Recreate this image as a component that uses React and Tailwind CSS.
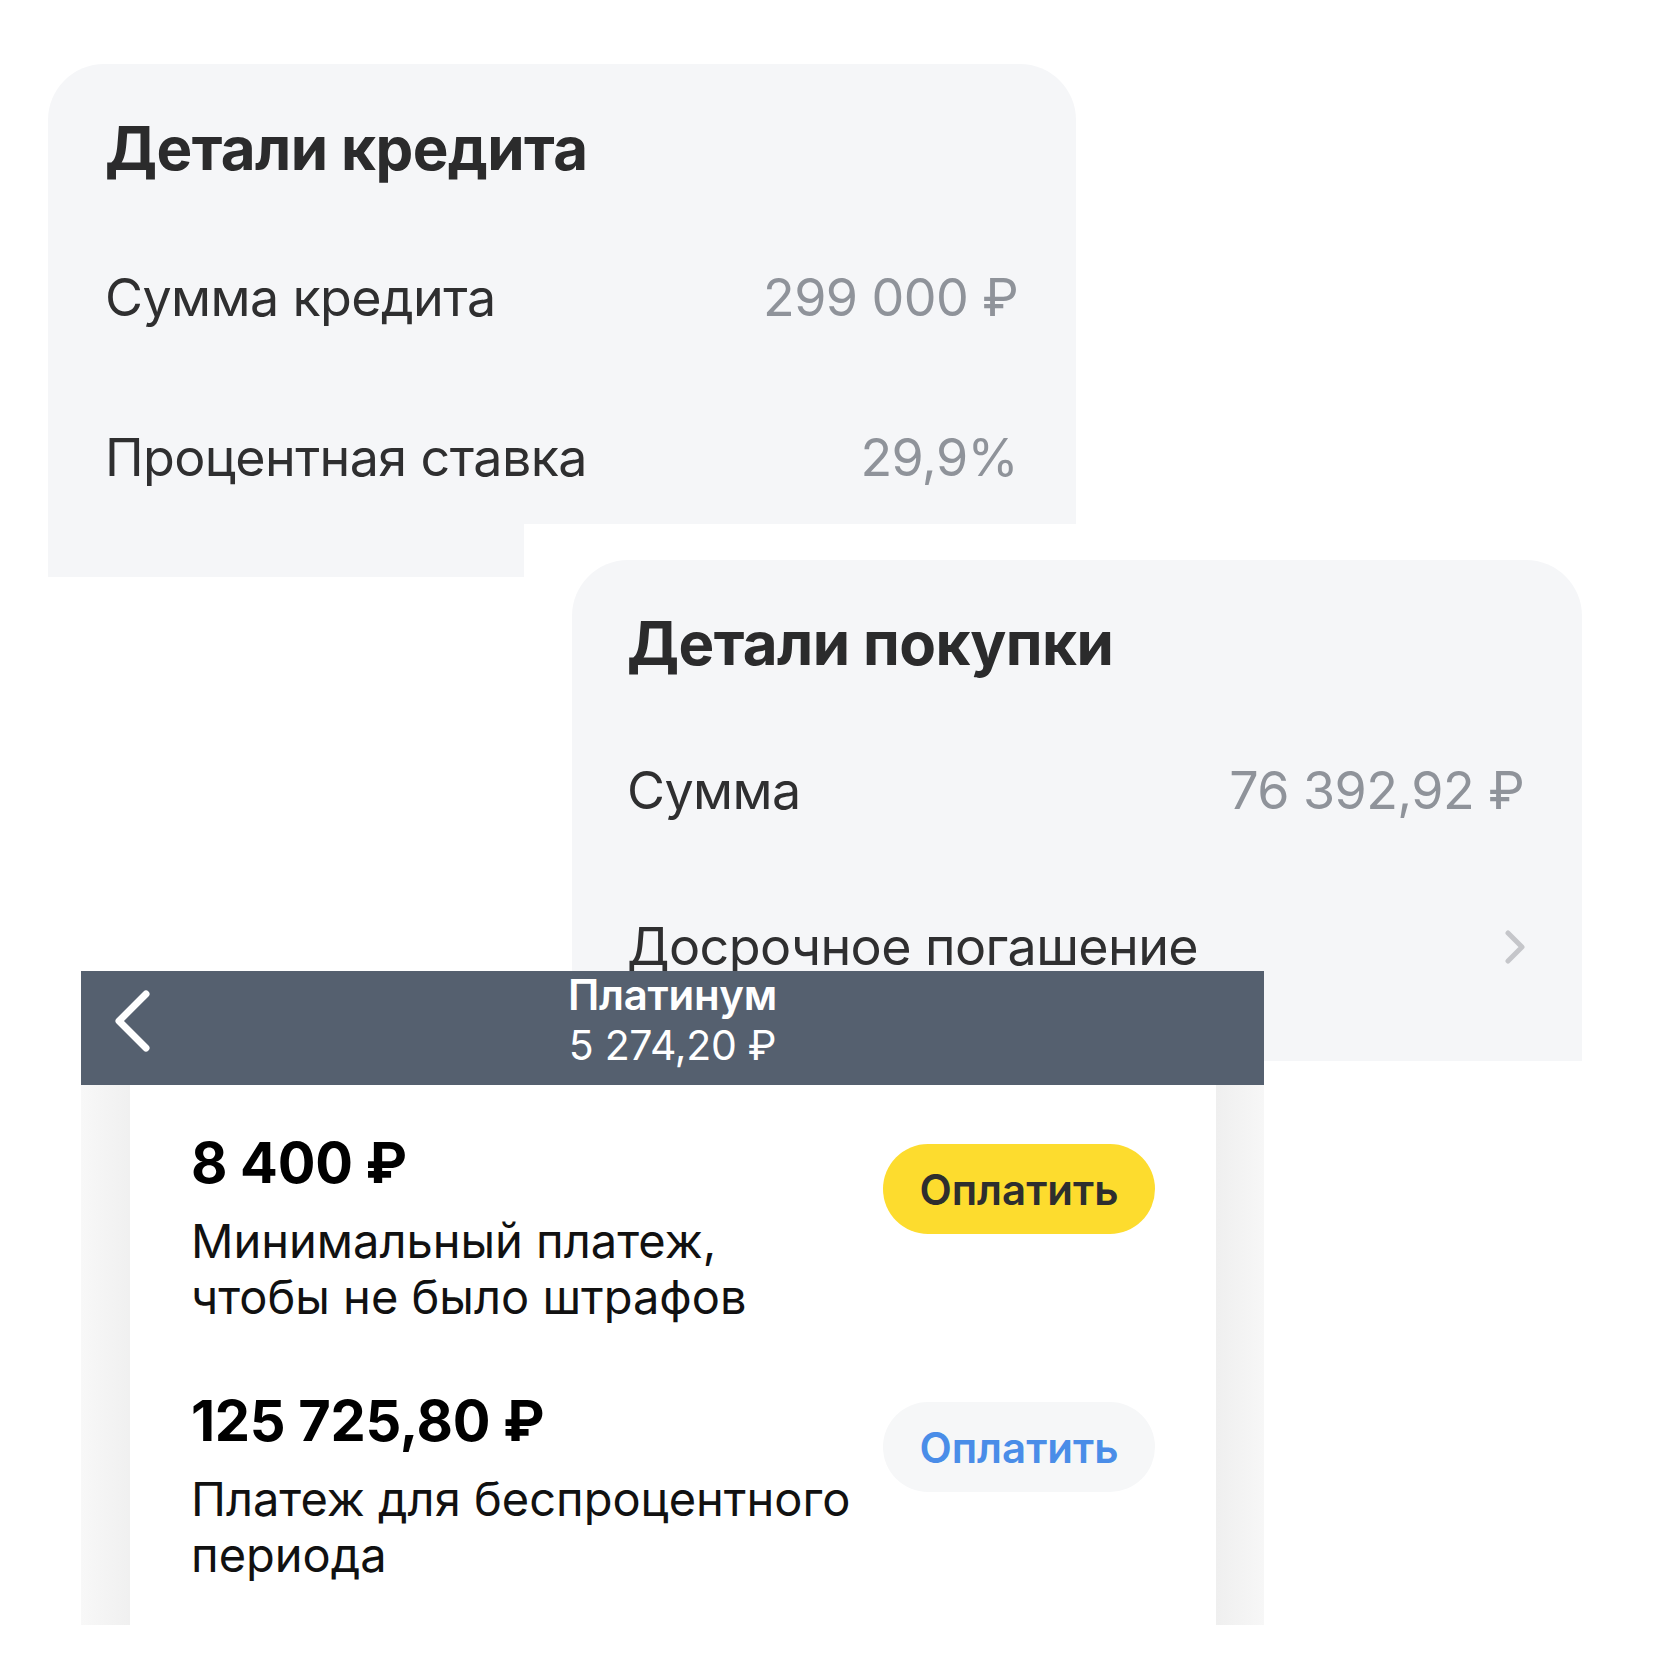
import React from 'react';

const font = { fontFamily: 'Inter, "Noto Sans", sans-serif' };

function DetailRow({ label, value, chevron, tall }) {
    return (
        <div className={`flex items-center justify-between ${tall ? 'h-[160px]' : 'h-[156px]'}`}>
            <span className="text-[52px] text-[#2f2f30] tracking-[-0.6px]">{label}</span>
            {value && <span className="text-[52px] text-[#8f939a] tracking-[-0.6px]">{value}</span>}
            {chevron && (
                <svg width="22" height="34" viewBox="0 0 22 34" className="mr-[-2px]">
                    <path d="M4 3 L18 17 L4 31" fill="none" stroke="#c5c6ca" strokeWidth="5" strokeLinecap="round" strokeLinejoin="round" />
                </svg>
            )}
        </div>
    );
}

function PayRow({ amount, lines, primary }) {
    return (
        <div className="flex items-start justify-between">
            <div className="flex flex-col">
                <span className="text-[56px] font-bold leading-[60px] text-black tracking-[-0.3px]">{amount}</span>
                <div className="mt-[20px] text-[47px] leading-[56px] text-[#111]">
                    {lines.map((l) => (
                        <div key={l}>{l}</div>
                    ))}
                </div>
            </div>
            <button
                className={`mt-[11px] w-[272px] h-[90px] rounded-full text-[42px] font-semibold ${primary
                        ? 'bg-[#fddc2e] text-[#2e2e2e]'
                        : 'bg-[#f6f7f8] text-[#4a8de8]'
                    }`}
            >
                Оплатить
            </button>
        </div>
    );
}

export default function App() {
    return (
        <div className="relative w-[1680px] h-[1680px] bg-white overflow-hidden" style={font}>
            {/* credit details */}
            <div className="absolute left-[48px] top-[64px] w-[1028px] h-[513px] bg-[#f5f6f8] rounded-t-[56px] pl-[57px] pr-[58px] pt-[40px]">
                <h2 className="h-[88px] flex items-center text-[60px] font-bold text-[#2b2b2c] tracking-[-0.6px]">Детали кредита</h2>
                <div className="mt-[26px]">
                    <DetailRow label="Сумма кредита" value="299 000 ₽" tall />
                    <DetailRow label="Процентная ставка" value="29,9%" tall />
                </div>
            </div>

            {/* purchase details */}
            <div className="absolute left-[524px] top-[524px] w-[1120px] h-[540px] bg-white pl-[48px] pt-[36px]">
                <div className="w-[1010px] h-[501px] bg-[#f5f6f8] rounded-t-[56px] pl-[55px] pr-[58px] pt-[39px]">
                    <h2 className="h-[88px] flex items-center text-[60px] font-bold text-[#2b2b2c] tracking-[-0.6px]">Детали покупки</h2>
                    <div className="mt-[26px]">
                        <DetailRow label="Сумма" value="76 392,92 ₽" />
                        <DetailRow label="Досрочное погашение" chevron />
                    </div>
                </div>
            </div>

            {/* card screen */}
            <div className="absolute left-[81px] top-[971px] w-[1183px] flex flex-col">
                <div className="relative h-[114px] bg-[#55606f] flex flex-col items-center">
                    <svg width="44" height="66" viewBox="0 0 44 66" className="absolute left-[32px] top-[17px]">
                        <path d="M33 6 L6 33 L33 60" fill="none" stroke="#fff" strokeWidth="7" strokeLinecap="round" strokeLinejoin="round" />
                    </svg>
                    <span className="mt-[-2px] text-[42px] font-semibold leading-[51px] text-white tracking-[-0.3px]">Платинум</span>
                    <span className="text-[41px] leading-[51px] text-white tracking-[-0.3px]">5 274,20 ₽</span>
                </div>
                <div className="flex h-[540px]">
                    <div className="w-[49px] bg-gradient-to-r from-[#f8f8f8] to-[#f0f0f0]" />
                    <div className="flex-1 bg-white px-[61px] pt-[48px] flex flex-col gap-[66px]">
                        <PayRow amount="8 400 ₽" lines={['Минимальный платеж,', 'чтобы не было штрафов']} primary />
                        <PayRow amount="125 725,80 ₽" lines={['Платеж для беспроцентного', 'периода']} />
                    </div>
                    <div className="w-[48px] bg-gradient-to-r from-[#efefef] to-[#f7f7f7]" />
                </div>
            </div>
        </div>
    );
}
